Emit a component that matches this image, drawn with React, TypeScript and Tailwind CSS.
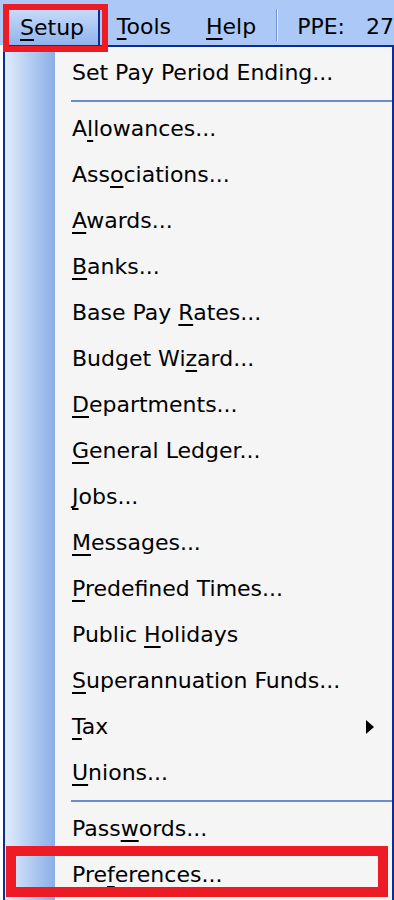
import React from 'react';

type Item = { pre: string; key: string; post: string; sub?: boolean };

const top: Item[] = [{ pre: 'Set Pay Period Ending...', key: '', post: '' }];

const middle: Item[] = [
  { pre: 'A', key: 'l', post: 'lowances...' },
  { pre: 'Ass', key: 'o', post: 'ciations...' },
  { pre: '', key: 'A', post: 'wards...' },
  { pre: '', key: 'B', post: 'anks...' },
  { pre: 'Base Pay ', key: 'R', post: 'ates...' },
  { pre: 'Budget Wi', key: 'z', post: 'ard...' },
  { pre: '', key: 'D', post: 'epartments...' },
  { pre: '', key: 'G', post: 'eneral Ledger...' },
  { pre: '', key: 'J', post: 'obs...' },
  { pre: '', key: 'M', post: 'essages...' },
  { pre: '', key: 'P', post: 'redefined Times...' },
  { pre: 'Public ', key: 'H', post: 'olidays' },
  { pre: '', key: 'S', post: 'uperannuation Funds...' },
  { pre: '', key: 'T', post: 'ax', sub: true },
  { pre: '', key: 'U', post: 'nions...' },
];

const bottom: Item[] = [
  { pre: 'Pass', key: 'w', post: 'ords...' },
  { pre: 'Pre', key: 'f', post: 'erences...' },
];

function Mn({ children }: { children: React.ReactNode }) {
  return <span className="underline decoration-2 underline-offset-[4px]">{children}</span>;
}

function Row({ item }: { item: Item }) {
  return (
    <div className="flex h-[46px] items-center justify-between pl-[17px] pr-[18px]">
      <span>
        {item.pre}
        {item.key && <Mn>{item.key}</Mn>}
        {item.post}
      </span>
      {item.sub && <span className="h-0 w-0 border-y-[7px] border-l-[8px] border-y-transparent border-l-black" />}
    </div>
  );
}

function Separator() {
  return (
    <div className="flex h-[10px] items-center pl-[16px]">
      <div className="h-[2px] w-full bg-[#6a8ccc]" />
    </div>
  );
}

export default function App() {
  return (
    <div
      className="relative h-[900px] w-[394px] overflow-hidden bg-white text-[22px] leading-none text-black"
      style={{ fontFamily: '"DejaVu Sans", sans-serif' }}
    >
      {/* menu bar */}
      <div className="flex h-[45px] items-end bg-[#abc8f6]">
        <div className="ml-[3px] flex h-[41px] w-[98px] items-center border-x-2 border-t-2 border-[#0b2d96] bg-gradient-to-b from-[#cddffb] to-[#8fb3ec] pl-[15px] pt-[4px]">
          <span>
            <Mn>S</Mn>etup
          </span>
        </div>
        <div className="ml-[17px] flex h-[41px] items-center pt-[4px]">
          <span>
            <Mn>T</Mn>ools
          </span>
        </div>
        <div className="ml-[35px] flex h-[41px] items-center pt-[4px]">
          <span>
            <Mn>H</Mn>elp
          </span>
        </div>
        <div className="mb-[4px] ml-[20px] h-[32px] w-[2px] border-l border-[#6f93d2] bg-[#e4edfb]" />
        <div className="ml-[19px] flex h-[41px] items-center gap-[21px] whitespace-nowrap pt-[4px]">
          <span>PPE:</span>
          <span>27</span>
        </div>
      </div>

      {/* dropdown */}
      <div className="ml-[3px] flex h-[860px] border-x-2 border-t-2 border-[#0b2d96] bg-[#f5f5f5]">
        <div className="w-[50px] shrink-0 bg-gradient-to-r from-[#e1ecfc] to-[#8aaee6]" />
        <div className="flex-1 pt-[3px]">
          {top.map((i) => (
            <Row key={i.pre} item={i} />
          ))}
          <Separator />
          {middle.map((i) => (
            <Row key={i.pre + i.key + i.post} item={i} />
          ))}
          <Separator />
          {bottom.map((i) => (
            <Row key={i.pre + i.key + i.post} item={i} />
          ))}
        </div>
      </div>

      {/* annotation boxes */}
      <div className="pointer-events-none absolute left-[3px] top-[4px] h-[48px] w-[105px] border-[6px] border-[#ed1c24]" />
      <div className="pointer-events-none absolute left-[6px] top-[846px] h-[51px] w-[382px] border-[10px] border-[#ed1c24]" />
    </div>
  );
}
